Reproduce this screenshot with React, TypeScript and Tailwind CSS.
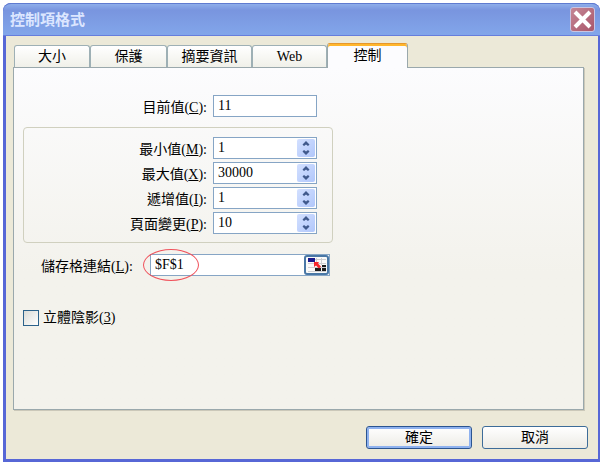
import React, { useState } from 'react';

interface SpinFieldProps {
  id: string;
  label: string;
  accessKey: string;
  initial: number;
}

const tabs = [
  { name: '大小', width: 'w-[76px]' },
  { name: '保護', width: 'w-[77px]' },
  { name: '摘要資訊', width: 'w-[85px]' },
  { name: 'Web', width: 'w-[75px]' },
  { name: '控制', width: 'w-[81px]' },
];

/**
 * Label text followed by its underlined access key
 */
function Caption({ text, accessKey, colon = true }: { text: string; accessKey: string; colon?: boolean }) {
  return (
    <>
      {text}(<u className="underline-offset-1">{accessKey}</u>){colon && ':'}
    </>
  );
}

function Chevron({ up = false }: { up?: boolean }) {
  return (
    <svg width="8" height="5" viewBox="0 0 8 5" className={up ? '' : 'rotate-180'}>
      <path d="M4 0 7.500 3.500 6 5 4 3.500 2 5 .5 3.500z" fill="#40598c" />
    </svg>
  );
}

/**
 * Number field with up and down buttons
 */
function SpinField({ id, label, accessKey, initial }: SpinFieldProps) {
  const [value, setValue] = useState(String(initial));
  const step = (amount: number) => setValue(String((Number(value) || 0) + amount));

  return (
    <div className="flex items-center gap-1.5">
      <label htmlFor={id} className="w-[183px] pt-1 text-right leading-[18px]">
        <Caption text={label} accessKey={accessKey} />
      </label>
      <div className="flex h-[22px] w-[104px] border border-[#86a5c5] bg-white p-px">
        <input
          id={id}
          value={value}
          onChange={(e) => setValue(e.target.value)}
          className="min-w-0 flex-1 pl-[3px] leading-4 outline-none"
        />
        <div className="flex w-[18px] flex-col rounded-xs bg-linear-to-br from-[#d3e0ff] to-[#b1c7fb]">
          <button aria-label={`${label} +`} onClick={() => step(1)} className="flex flex-1 items-center justify-center">
            <Chevron up />
          </button>
          <button aria-label={`${label} -`} onClick={() => step(-1)} className="flex flex-1 items-center justify-center">
            <Chevron />
          </button>
        </div>
      </div>
    </div>
  );
}

function RangePickerIcon() {
  return (
    <svg width="18" height="14" viewBox="0 0 18 14">
      <path d="M0 0h18v14H0z" fill="#fafafa" />
      <path d="M0 5.5h18M0 9.5h18M0 13.5h18M7 1.500h11M8.500 0v5M13.500 0v7" stroke="#cfcfd2" fill="none" />
      <path d="M0 0h7v4H0z" fill="#1a1a8c" />
      <path d="M7 10h6v3H7zM14 7h4v2h-4zM14 10h4v3h-4z" fill="#1c1c1c" />
      <path d="M6 4h5L10 5.500l3 3-2 2-3-3L6 9z" fill="#f5262c" />
    </svg>
  );
}

function App() {
  const [activeTab, setActiveTab] = useState('控制');
  const [current, setCurrent] = useState('11');
  const [link, setLink] = useState('$F$1');

  return (
    <div className="flex min-h-screen bg-white pt-[3px] pl-[3px] font-['Liberation_Serif','Noto_Sans_CJK_TC',serif] text-sm text-black">
      <div className="flex flex-1 flex-col rounded-t-lg bg-[#5767d6]">
        {/* Title bar */}
        <header className="flex h-[33px] items-center justify-between rounded-t-lg border-t border-b border-t-[#5f7bd0] border-b-[#667edc] bg-linear-to-b from-[#8eaeea] from-0% via-[#7995df] via-20% to-[#82a6ea] pr-[5px] pl-[7px]">
          <h1 className="pt-0.5 text-[15px] font-bold text-[#dce6ff]">控制項格式</h1>
          <button
            aria-label="關閉"
            className="flex size-[25px] items-center justify-center rounded-[3px] border border-[#c9c5e2] bg-linear-to-br from-[#c58796] to-[#a9566b]"
          >
            <svg width="19" height="19" viewBox="0 0 19 19">
              <path d="M2 2 17 17M17 2 2 17" stroke="#fff" strokeWidth="4" fill="none" />
            </svg>
          </button>
        </header>

        <div className="mr-0.5 mb-[3px] ml-[3px] flex flex-1 flex-col bg-[#ece9d8]">
          {/* Tabs */}
          <div role="tablist" className="flex h-[31px] items-end pl-2">
            {tabs.map((tab) => {
              const active = tab.name === activeTab;
              return (
                <button
                  key={tab.name}
                  role="tab"
                  aria-selected={active}
                  onClick={() => setActiveTab(tab.name)}
                  className={`${tab.width} rounded-t-[3px] border border-b-0 ${
                    active
                      ? 'relative -mb-px h-[25px] border-[#9aa8ac] border-t-[#e5972d] bg-[#fcfcfe] shadow-[inset_0_2px_#ffb62c]'
                      : 'h-[22px] border-[#9eb0b5] bg-linear-to-b from-white to-[#f0f0e9]'
                  }`}
                >
                  {tab.name}
                </button>
              );
            })}
          </div>

          {/* Tab panel */}
          <main
            role="tabpanel"
            className="mr-[14px] ml-[7px] flex-1 border border-[#9aa8ac] bg-linear-to-b from-[#fcfcfe] to-[#f3f2ec] to-60% pt-[27px] pb-4 pl-[9px] shadow-[1px_1px_#cbc8b9]"
          >
            <div className="flex items-center gap-1.5">
              <label htmlFor="current" className="w-[184px] pt-1 text-right leading-[18px]">
                <Caption text="目前值" accessKey="C" />
              </label>
              <input
                id="current"
                value={current}
                onChange={(e) => setCurrent(e.target.value)}
                className="h-[22px] w-[104px] border border-[#86a5c5] bg-white pl-1 leading-4 outline-none"
              />
            </div>

            <div className="mt-2.5 flex w-[310px] flex-col gap-[3px] rounded border border-[#d0d0bf] pt-[9px] pb-2">
              <SpinField id="min" label="最小值" accessKey="M" initial={1} />
              <SpinField id="max" label="最大值" accessKey="X" initial={30000} />
              <SpinField id="step" label="遞增值" accessKey="I" initial={1} />
              <SpinField id="page" label="頁面變更" accessKey="P" initial={10} />
            </div>

            <div className="mt-[11px] flex items-center pl-[18px]">
              <label htmlFor="link" className="w-[109px] pt-1 leading-[18px]">
                <Caption text="儲存格連結" accessKey="L" />
              </label>
              <div className="relative flex h-[22px] w-[180px] border border-[#86a5c5] bg-white">
                <input
                  id="link"
                  value={link}
                  onChange={(e) => setLink(e.target.value)}
                  className="min-w-0 flex-1 pl-1 leading-4 outline-none"
                />
                <button
                  aria-label="選取儲存格"
                  className="flex w-[25px] items-center justify-center rounded-[3px] border-2 border-[#4a78a6] bg-[#fafaf8]"
                >
                  <RangePickerIcon />
                </button>
                {/* Highlight ring around the linked cell */}
                <span className="pointer-events-none absolute -top-1.5 -left-2 h-8 w-14 rounded-[50%] border border-[#f0525c]" />
              </div>
            </div>

            <div className="mt-[34px] flex items-center gap-1">
              <input
                id="shading"
                type="checkbox"
                className="size-4 appearance-none border border-[#2c628b] bg-linear-to-br from-[#dcdcd7] to-white checked:bg-[#21a121]"
              />
              <label htmlFor="shading" className="leading-4">
                <Caption text="立體陰影" accessKey="3" colon={false} />
              </label>
            </div>
          </main>

          {/* Footer */}
          <footer className="flex justify-end gap-2.5 pt-4 pr-2.5 pb-2.5">
            <button className="h-[23px] w-[106px] rounded-[3px] border border-[#2b5591] bg-linear-to-b from-white to-[#ecebe5] leading-5 shadow-[inset_0_0_0_2px_#8fb2ef]">
              確定
            </button>
            <button className="h-[23px] w-[106px] rounded-[3px] border border-[#3d6c99] bg-linear-to-b from-white to-[#ecebe5] leading-5">
              取消
            </button>
          </footer>
        </div>
      </div>
    </div>
  );
}

export default App;
